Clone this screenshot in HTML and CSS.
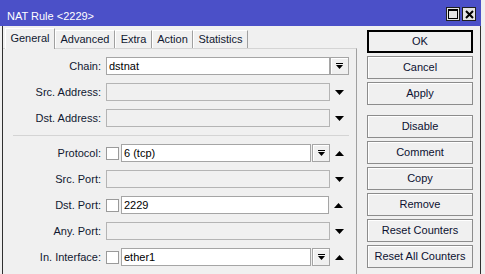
FILE: index.html
```html
<!DOCTYPE html>
<html>

	<head>
		<meta charset='utf-8' />
		<title>NAT Rule &lt;2229&gt;</title>
		<link rel="stylesheet" href="styles.css">
	</head>

	<body>
		<div class="window">
			<div class="titlebar">
				<span class="title">NAT Rule &lt;2229&gt;</span>
				<div class="ctrls">
					<span class="ctrl"><svg width="10" height="10" viewBox="0 0 10 10"><rect x="0.5" y="0.5" width="9" height="9" fill="none" stroke="#000" /><rect x="0" y="0" width="10" height="2" fill="#000" /></svg></span>
					<span class="ctrl"><svg width="9" height="9" viewBox="0 0 9 9"><path d="M1 1 L8 8 M8 1 L1 8" stroke="#000" stroke-width="2" /></svg></span>
				</div>
			</div>
			<div class="frame">
				<div class="main">
					<div class="tabs">
						<div class="tab active tab-general">General</div>
						<div class="tab tab-advanced">Advanced</div>
						<div class="tab tab-extra">Extra</div>
						<div class="tab tab-action">Action</div>
						<div class="tab tab-stats">Statistics</div>
					</div>
					<div class="panel">
						<div class="row">
							<label class="lbl">Chain:</label>
							<div class="inp full">dstnat</div>
							<span class="drop"><svg width="7" height="7" viewBox="0 0 7 7"><rect x="0" y="0" width="7" height="1" fill="#000" /><polygon points="0,2 7,2 3.5,6" fill="#000" /></svg></span>
						</div>
						<div class="row">
							<label class="lbl">Src. Address:</label>
							<div class="inp full off"></div>
							<span class="arrow"><svg width="9" height="5" viewBox="0 0 9 5"><polygon points="0,0 9,0 4.5,5" fill="#000" /></svg></span>
						</div>
						<div class="row">
							<label class="lbl">Dst. Address:</label>
							<div class="inp full off"></div>
							<span class="arrow"><svg width="9" height="5" viewBox="0 0 9 5"><polygon points="0,0 9,0 4.5,5" fill="#000" /></svg></span>
						</div>
						<div class="sep"></div>
						<div class="row">
							<label class="lbl">Protocol:</label>
							<span class="chk"></span>
							<div class="inp short">6 (tcp)</div>
							<span class="drop small"><svg width="7" height="7" viewBox="0 0 7 7"><rect x="0" y="0" width="7" height="1" fill="#000" /><polygon points="0,2 7,2 3.5,6" fill="#000" /></svg></span>
							<span class="arrow"><svg width="9" height="5" viewBox="0 0 9 5"><polygon points="0,5 9,5 4.5,0" fill="#000" /></svg></span>
						</div>
						<div class="row">
							<label class="lbl">Src. Port:</label>
							<div class="inp full off"></div>
							<span class="arrow"><svg width="9" height="5" viewBox="0 0 9 5"><polygon points="0,0 9,0 4.5,5" fill="#000" /></svg></span>
						</div>
						<div class="row">
							<label class="lbl">Dst. Port:</label>
							<span class="chk"></span>
							<div class="inp mid">2229</div>
							<span class="arrow"><svg width="9" height="5" viewBox="0 0 9 5"><polygon points="0,5 9,5 4.5,0" fill="#000" /></svg></span>
						</div>
						<div class="row">
							<label class="lbl">Any. Port:</label>
							<div class="inp full off"></div>
							<span class="arrow"><svg width="9" height="5" viewBox="0 0 9 5"><polygon points="0,0 9,0 4.5,5" fill="#000" /></svg></span>
						</div>
						<div class="row">
							<label class="lbl">In. Interface:</label>
							<span class="chk"></span>
							<div class="inp short">ether1</div>
							<span class="drop small"><svg width="7" height="7" viewBox="0 0 7 7"><rect x="0" y="0" width="7" height="1" fill="#000" /><polygon points="0,2 7,2 3.5,6" fill="#000" /></svg></span>
							<span class="arrow"><svg width="9" height="5" viewBox="0 0 9 5"><polygon points="0,5 9,5 4.5,0" fill="#000" /></svg></span>
						</div>
					</div>
				</div>
				<div class="actions">
					<div class="btn default">OK</div>
					<div class="btn">Cancel</div>
					<div class="btn apply">Apply</div>
					<div class="btn">Disable</div>
					<div class="btn">Comment</div>
					<div class="btn">Copy</div>
					<div class="btn">Remove</div>
					<div class="btn">Reset Counters</div>
					<div class="btn">Reset All Counters</div>
				</div>
			</div>
		</div>
	</body>

</html>
```

FILE: styles.css
```css
body {
	margin: 0;
	background: #f0f0f0;
	font-family: "Liberation Sans", Arial, sans-serif;
	font-size: 11px;
	color: #101830;
}

.window {
	width: 481px;
	height: 274px;
	overflow: hidden;
}

/* title bar */
.titlebar {
	height: 26px;
	background: #4b50c8;
	display: flex;
	align-items: flex-start;
}

.titlebar .title {
	color: #fff;
	line-height: 14px;
	margin: 9px 0 0 7px;
}

.ctrls {
	display: flex;
	gap: 2px;
	margin: 7px 5px 0 auto;
}

.ctrl {
	width: 12px;
	height: 12px;
	border: 1px solid #202020;
	background: #e4e4e4;
	display: flex;
	align-items: center;
	justify-content: center;
}

/* frame */
.frame {
	display: flex;
	margin-left: 2px;
	width: 477px;
	height: 248px;
	border-left: 1px solid #303030;
	border-right: 1px solid #303030;
}

.main {
	width: 354px;
	display: flex;
	flex-direction: column;
}

.tabs {
	display: flex;
	align-items: flex-end;
	margin: 2px 0 0 2px;
	height: 20px;
}

.tab {
	height: 17px;
	line-height: 16px;
	text-align: center;
	border-top: 1px solid #fff;
	border-left: 1px solid #fff;
	border-right: 1px solid #a0a0a0;
	background: #f0f0f0;
	box-sizing: content-box;
}

.tab.active {
	height: 20px;
	line-height: 18px;
	margin-bottom: -1px;
	position: relative;
}

.tab-general { width: 48px; }
.tab-advanced { width: 58px; }
.tab-extra { width: 35px; }
.tab-action { width: 39px; }
.tab-stats { width: 53px; }

.panel {
	flex: 1;
	border-top: 1px solid #d4d4d4;
	border-right: 1px solid #a0a0a0;
	padding-top: 8px;
}

.row {
	display: flex;
	align-items: center;
	height: 18px;
	margin-bottom: 8px;
}

.lbl {
	width: 98px;
	margin-right: 5px;
	text-align: right;
	white-space: nowrap;
}

.inp {
	height: 18px;
	box-sizing: border-box;
	border: 1px solid #a5a5a5;
	background: #fff;
	padding-left: 2px;
	line-height: 16px;
	color: #000;
}

.inp.off {
	background: #f0f0f0;
	border-color: #b4b4b4;
}

.inp.full { width: 224px; }
.inp.short { width: 190px; margin-right: 1px; }
.inp.mid { width: 208px; }

.chk {
	width: 13px;
	height: 13px;
	box-sizing: border-box;
	border: 1px solid #9a9a9a;
	background: #fff;
	margin-right: 2px;
}

.drop {
	width: 19px;
	height: 18px;
	box-sizing: border-box;
	border: 1px solid #a5a5a5;
	box-shadow: inset 1px 1px #fff;
	background: #f0f0f0;
	display: flex;
	align-items: center;
	justify-content: center;
}

.drop.small {
	width: 18px;
}

.arrow {
	width: 19px;
	display: flex;
	justify-content: center;
}

.sep {
	height: 1px;
	width: 336px;
	background: #d4d4d4;
	margin: 1px 0 8px 10px;
}

/* buttons */
.actions {
	margin-left: 10px;
	padding-top: 4px;
	width: 106px;
}

.btn {
	height: 23px;
	box-sizing: border-box;
	border: 1px solid #8c8c8c;
	box-shadow: inset 1px 1px #fff;
	background: #f0f0f0;
	text-align: center;
	line-height: 21px;
	margin-bottom: 3px;
	color: #0c1030;
}

.btn.default {
	border: 2px solid #000;
	line-height: 19px;
	box-shadow: none;
}

.btn.apply {
	margin-bottom: 10px;
}
```
